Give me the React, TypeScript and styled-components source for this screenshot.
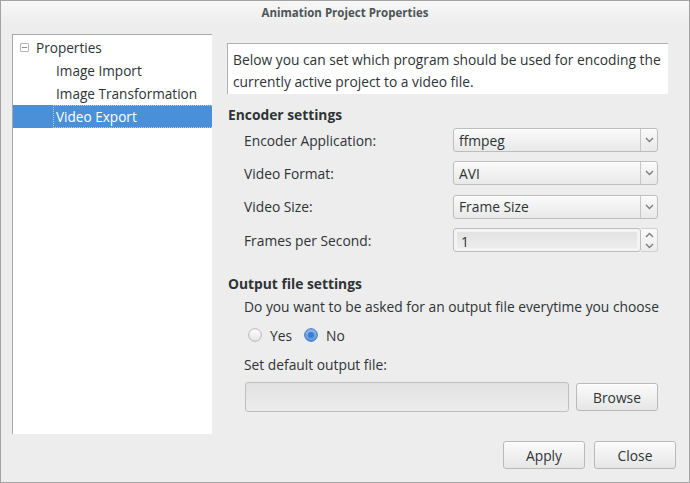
import React from "react";
import styled, { createGlobalStyle } from "styled-components";

const Global = createGlobalStyle`
  html, body { margin: 0; padding: 0; background: #ededed; }
  * { box-sizing: border-box; }
  body { font-family: "Open Sans", "Noto Sans", sans-serif; color: #2e3436; }
`;

const Window = styled.div`
  width: 690px;
  height: 483px;
  border: 1px solid #a3a3a3;
  background: #ededed;
  display: flex;
  flex-direction: column;
  overflow: hidden;
`;

const TitleBar = styled.div`
  height: 25px;
  flex: none;
  display: flex;
  align-items: center;
  justify-content: center;
  padding-bottom: 2px;
  background: linear-gradient(#f7f7f7, #ededed);
  font-size: 11.5px;
  font-weight: 700;
  color: #4d5557;
`;

const Content = styled.div`
  flex: 1;
  display: flex;
  padding: 8px 0 0 11px;
  min-height: 0;
`;

const Tree = styled.div`
  width: 200px;
  height: 400px;
  flex: none;
  background: #fff;
  border-top: 1px solid #a8a8a8;
  border-left: 1px solid #a8a8a8;
  padding-top: 1px;
  font-size: 13.6px;
`;

const TreeRow = styled.div<{ $indent: number; $selected?: boolean }>`
  height: 23px;
  display: flex;
  align-items: center;
  padding-left: ${(p) => p.$indent}px;
  background: ${(p) => (p.$selected ? "#4a90d9" : "transparent")};
  color: ${(p) => (p.$selected ? "#ffffff" : "#2e3436")};
`;

const Expander = styled.span`
  width: 9px;
  height: 9px;
  border: 1px solid #b4b4b4;
  border-radius: 1px;
  margin-right: 7px;
  position: relative;
  flex: none;
  &::after {
    content: "";
    position: absolute;
    left: 1px;
    right: 1px;
    top: 3px;
    height: 1px;
    background: #8c8c8c;
  }
`;

const TreeLabel = styled.span<{ $focus?: boolean }>`
  flex: 1;
  height: 100%;
  display: flex;
  align-items: center;
  padding-left: 2px;
  border: 1px dotted ${(p) => (p.$focus ? "rgba(255,255,255,0.55)" : "transparent")};
  border-right: none;
`;

const Right = styled.div`
  margin-left: 15px;
  width: 441px;
  padding-top: 9px;
  display: flex;
  flex-direction: column;
  font-size: 13.8px;
`;

const InfoBox = styled.div`
  height: 51px;
  background: #fff;
  border-top: 1px solid #b0b0b0;
  border-left: 1px solid #b0b0b0;
  padding: 5px 5px;
  line-height: 22px;
  white-space: nowrap;
`;

const SectionTitle = styled.div<{ $mt: number }>`
  font-weight: 700;
  line-height: 20px;
  margin-top: ${(p) => p.$mt}px;
  padding-left: 1px;
`;

const Indented = styled.div`
  width: 434px;
  padding-left: 17px;
  overflow: hidden;
  display: flex;
  flex-direction: column;
`;

const FormGrid = styled.div`
  margin-top: 3px;
  display: grid;
  grid-template-columns: 209px 205px;
  grid-auto-rows: 24px;
  row-gap: 9.4px;
  align-items: center;
`;

const Combo = styled.div`
  height: 24px;
  border: 1px solid #bdbdbd;
  border-radius: 3px;
  background: linear-gradient(#fafafa, #e9e9e9);
  display: flex;
  align-items: center;
  padding-left: 5px;
  box-shadow: inset 0 1px 0 #ffffff;
`;

const ComboText = styled.span`
  flex: 1;
`;

const ComboButton = styled.span`
  width: 17px;
  height: 100%;
  border-left: 1px solid #c6c6c6;
  display: flex;
  align-items: center;
  justify-content: center;
`;

const Spin = styled.div`
  height: 24px;
  display: flex;
`;

const SpinEntry = styled.div`
  flex: 1;
  border: 1px solid #bdbdbd;
  border-radius: 3px;
  background: #f4f4f4;
  padding: 3px;
  display: flex;
`;

const SpinInner = styled.div`
  flex: 1;
  background: linear-gradient(#e3e3e3, #ededed);
  display: flex;
  align-items: center;
  padding-left: 4px;
  padding-top: 2px;
`;

const SpinButtons = styled.div`
  width: 17px;
  display: flex;
  flex-direction: column;
  align-items: center;
  justify-content: space-around;
  border: 1px solid #d0d0d0;
  border-left: none;
  border-radius: 0 3px 3px 0;
  background: linear-gradient(#fafafa, #ececec);
`;

const Question = styled.div`
  margin-top: 3px;
  line-height: 20px;
  white-space: nowrap;
  overflow: hidden;
`;

const RadioRow = styled.div`
  margin-top: 8px;
  height: 20px;
  display: flex;
  align-items: center;
  padding-left: 4px;
`;

const RadioItem = styled.label`
  display: flex;
  align-items: center;
  margin-right: 12px;
  gap: 8px;
`;

const PlainLine = styled.div<{ $mt: number }>`
  margin-top: ${(p) => p.$mt}px;
  line-height: 20px;
`;

const FileRow = styled.div`
  margin-top: 7px;
  display: flex;
  align-items: center;
  gap: 7px;
  padding-left: 1px;
`;

const Entry = styled.div`
  width: 324px;
  height: 30px;
  border: 1px solid #bfbfbf;
  border-radius: 3px;
  background: linear-gradient(#e2e2e2, #ececec);
`;

const Button = styled.button<{ $w: number }>`
  width: ${(p) => p.$w}px;
  height: 28px;
  border: 1px solid #b9b9b9;
  border-radius: 3px;
  background: linear-gradient(#fbfbfb, #e6e6e6);
  box-shadow: inset 0 1px 0 #ffffff;
  font-family: "Open Sans", "Noto Sans", sans-serif;
  font-size: 13.8px;
  color: #2e3436;
  padding: 0;
`;

const ButtonBar = styled.div`
  flex: none;
  display: flex;
  justify-content: flex-end;
  gap: 9px;
  padding: 7px 13px 13px 0;
`;

const Chevron = ({ up }: { up?: boolean }) => (
  <svg width="9" height="6" viewBox="0 0 9 6">
    <path
      d={up ? "M1 5 L4.5 1.5 L8 5" : "M1 1 L4.5 4.5 L8 1"}
      fill="none"
      stroke="#7d7d7d"
      strokeWidth="1.4"
    />
  </svg>
);

const Radio = ({ checked }: { checked?: boolean }) => (
  <svg width="14" height="14" viewBox="0 0 14 14">
    <defs>
      <linearGradient id="ru" x1="0" y1="0" x2="0" y2="1">
        <stop offset="0" stopColor="#ffffff" />
        <stop offset="1" stopColor="#e4e4e4" />
      </linearGradient>
      <linearGradient id="rc" x1="0" y1="0" x2="0" y2="1">
        <stop offset="0" stopColor="#8fbcf0" />
        <stop offset="1" stopColor="#5a95dc" />
      </linearGradient>
    </defs>
    {checked ? (
      <>
        <circle cx="7" cy="7" r="6.3" fill="url(#rc)" stroke="#3a72bc" strokeWidth="1" />
        <circle cx="7" cy="7" r="3" fill="#3d7bd0" />
      </>
    ) : (
      <circle cx="7" cy="7" r="6.3" fill="url(#ru)" stroke="#b5b5b5" strokeWidth="1" />
    )}
  </svg>
);

const ComboBox = ({ value }: { value: string }) => (
  <Combo>
    <ComboText>{value}</ComboText>
    <ComboButton>
      <Chevron />
    </ComboButton>
  </Combo>
);

export default function App() {
  return (
    <>
      <Global />
      <Window>
        <TitleBar>Animation Project Properties</TitleBar>
        <Content>
          <Tree>
            <TreeRow $indent={7}>
              <Expander />
              Properties
            </TreeRow>
            <TreeRow $indent={40}>
              <TreeLabel>Image Import</TreeLabel>
            </TreeRow>
            <TreeRow $indent={40}>
              <TreeLabel>Image Transformation</TreeLabel>
            </TreeRow>
            <TreeRow $indent={40} $selected>
              <TreeLabel $focus>Video Export</TreeLabel>
            </TreeRow>
          </Tree>
          <Right>
            <InfoBox>
              Below you can set which program should be used for encoding the
              <br />
              currently active project to a video file.
            </InfoBox>
            <SectionTitle $mt={11}>Encoder settings</SectionTitle>
            <Indented>
              <FormGrid>
                <span>Encoder Application:</span>
                <ComboBox value="ffmpeg" />
                <span>Video Format:</span>
                <ComboBox value="AVI" />
                <span>Video Size:</span>
                <ComboBox value="Frame Size" />
                <span>Frames per Second:</span>
                <Spin>
                  <SpinEntry>
                    <SpinInner>1</SpinInner>
                  </SpinEntry>
                  <SpinButtons>
                    <Chevron up />
                    <Chevron />
                  </SpinButtons>
                </Spin>
              </FormGrid>
            </Indented>
            <SectionTitle $mt={22}>Output file settings</SectionTitle>
            <Indented>
              <Question>Do you want to be asked for an output file everytime you choose</Question>
              <RadioRow>
                <RadioItem>
                  <Radio />
                  Yes
                </RadioItem>
                <RadioItem>
                  <Radio checked />
                  No
                </RadioItem>
              </RadioRow>
              <PlainLine $mt={10}>Set default output file:</PlainLine>
              <FileRow>
                <Entry />
                <Button $w={82}>Browse</Button>
              </FileRow>
            </Indented>
          </Right>
        </Content>
        <ButtonBar>
          <Button $w={82}>Apply</Button>
          <Button $w={82}>Close</Button>
        </ButtonBar>
      </Window>
    </>
  );
}
